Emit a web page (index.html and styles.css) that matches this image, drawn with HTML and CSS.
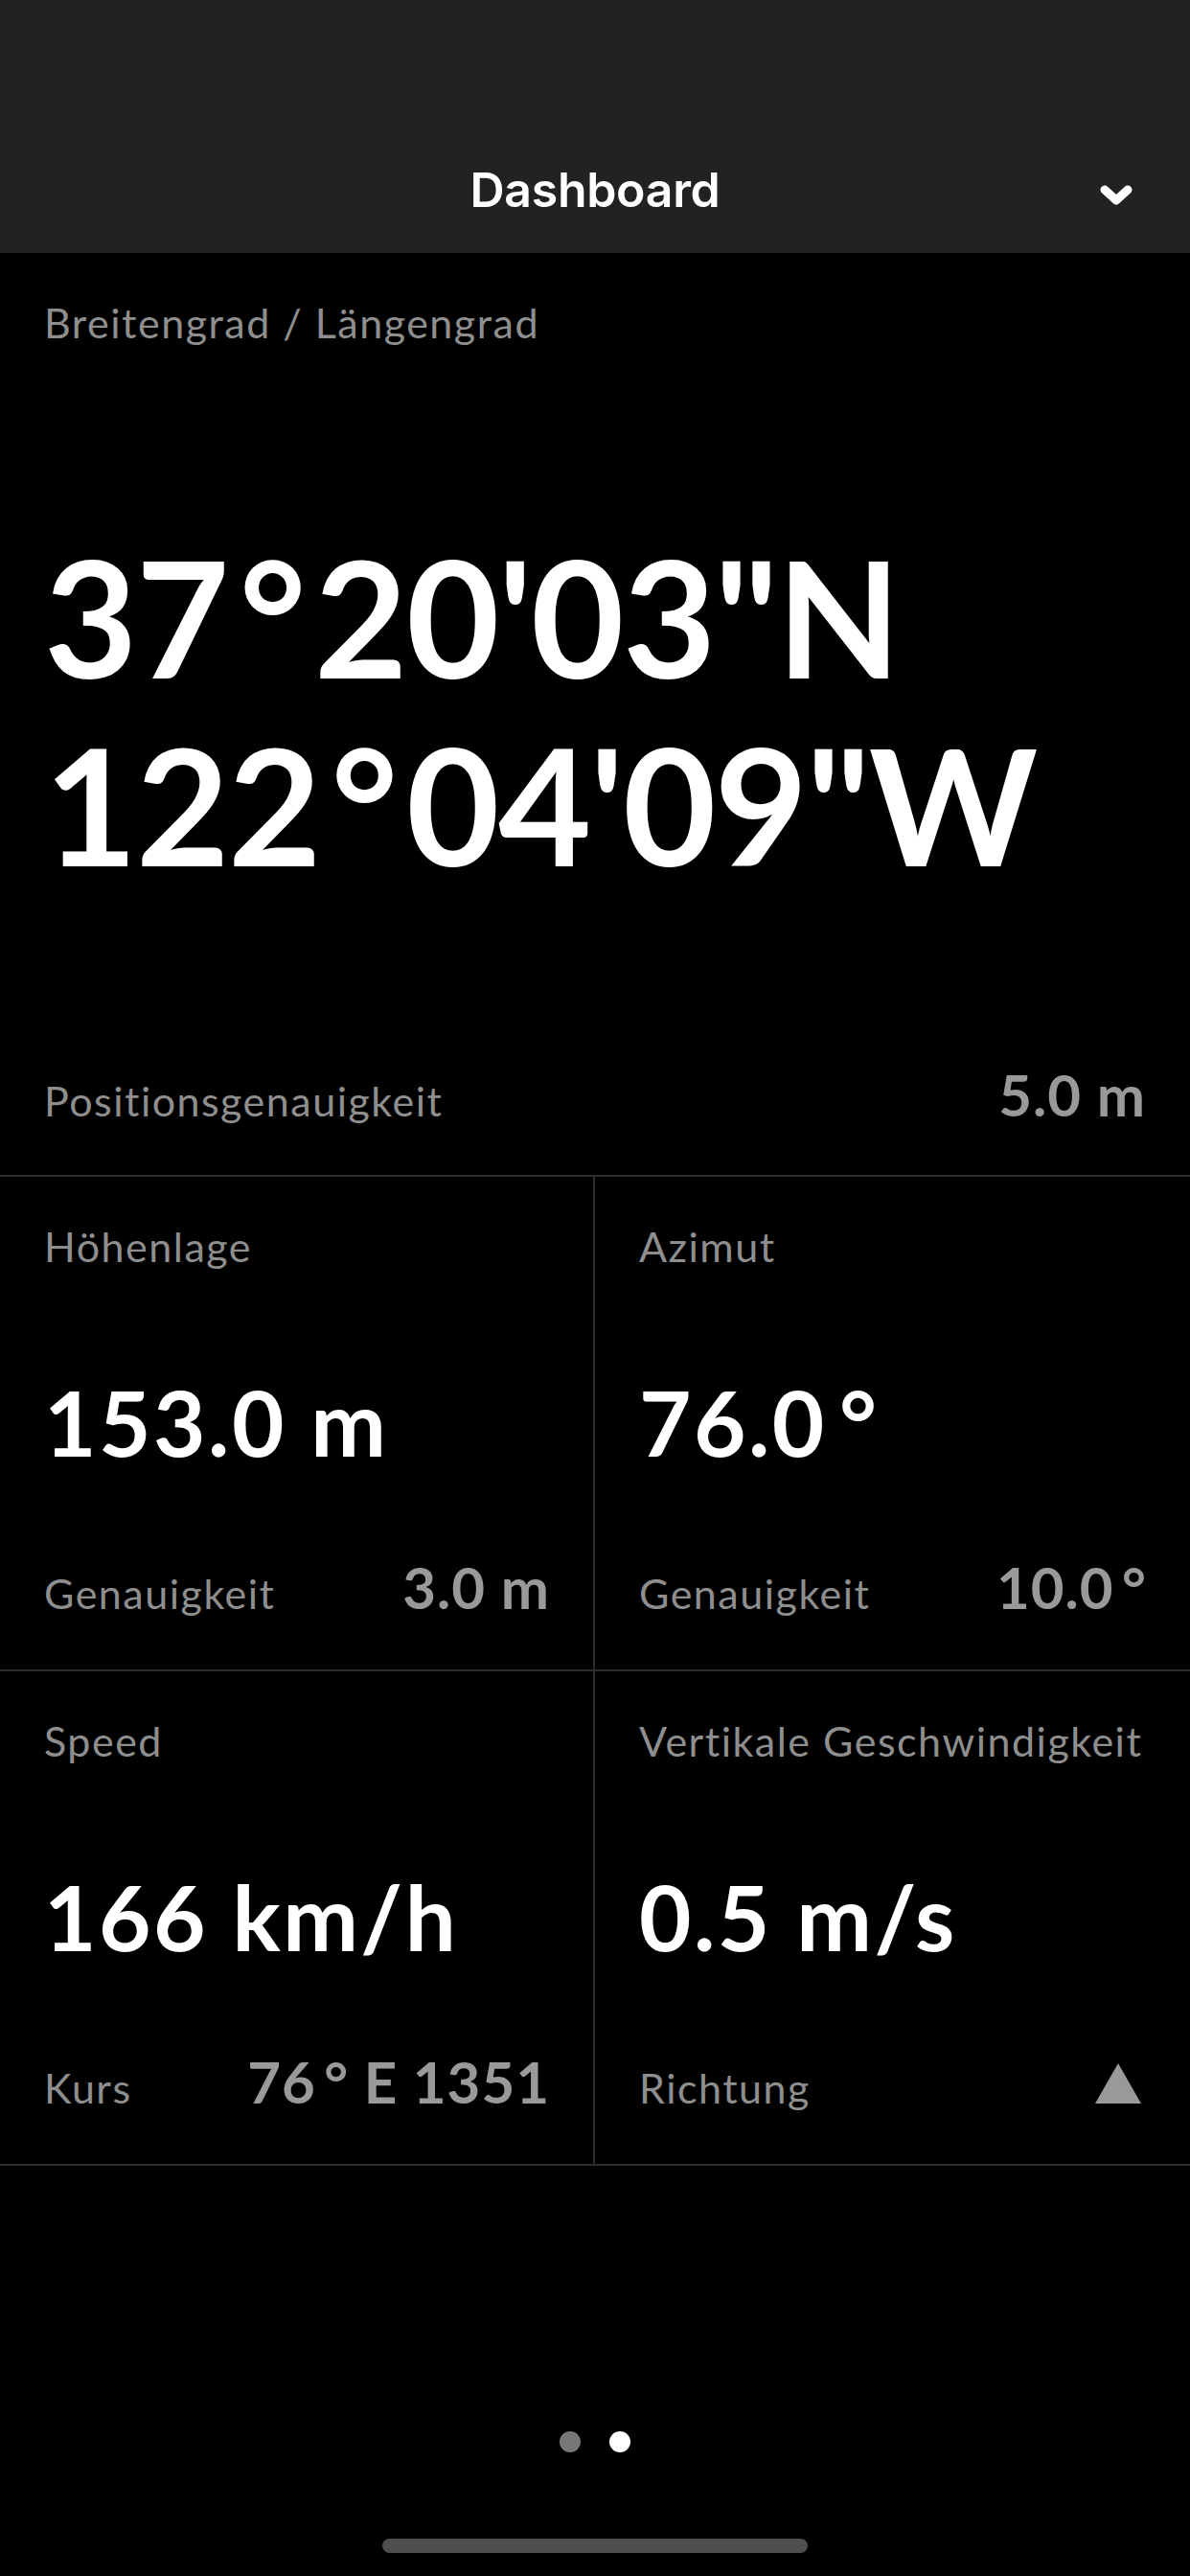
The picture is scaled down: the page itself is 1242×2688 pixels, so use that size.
FILE: index.html
```html
<!DOCTYPE html>
<html lang="de">
<head>
<meta charset="utf-8">
<title>Dashboard</title>
<link rel="stylesheet" href="styles.css">
</head>
<body>
<header class="topbar">
  <div class="topbar-side"></div>
  <h1 class="topbar-title">Dashboard</h1>
  <div class="topbar-side topbar-right">
    <svg class="chevron" width="34" height="22" viewBox="0 0 34 22"><path d="M5 5 L17 16 L29 5" fill="none" stroke="#fff" stroke-width="9" stroke-linecap="round" stroke-linejoin="round"/></svg>
  </div>
</header>
<main class="content">
  <section class="coords">
    <div class="label">Breitengrad / Längengrad</div>
    <div class="coord-lines">
      <div class="coord">37<span class="deg-big">°</span>20'03"N</div>
      <div class="coord">122<span class="deg-big">°</span>04'09"W</div>
    </div>
    <div class="pos-row">
      <span class="label row-label">Positionsgenauigkeit</span>
      <span class="sub-value">5.0 m</span>
    </div>
  </section>
  <section class="grid">
    <div class="cell">
      <div class="label">Höhenlage</div>
      <div class="big-value">153.0 m</div>
      <div class="sub-row"><span class="label row-label">Genauigkeit</span><span class="sub-value">3.0 m</span></div>
    </div>
    <div class="cell">
      <div class="label">Azimut</div>
      <div class="big-value">76.0<span class="deg">°</span></div>
      <div class="sub-row"><span class="label row-label">Genauigkeit</span><span class="sub-value">10.0<span class="deg">°</span></span></div>
    </div>
    <div class="cell">
      <div class="label">Speed</div>
      <div class="big-value">166 km/h</div>
      <div class="sub-row"><span class="label row-label">Kurs</span><span class="sub-value">76<span class="deg">°</span> E 1351</span></div>
    </div>
    <div class="cell">
      <div class="label">Vertikale Geschwindigkeit</div>
      <div class="big-value">0.5 m/s</div>
      <div class="sub-row"><span class="label row-label">Richtung</span><svg class="arrow" width="48" height="42" viewBox="0 0 48 42"><polygon points="24,0 48,42 0,42" fill="#999"/></svg></div>
    </div>
  </section>
  <nav class="pager">
    <span class="dot"></span>
    <span class="dot dot-active"></span>
  </nav>
  <div class="home-indicator"></div>
</main>
</body>
</html>
```

FILE: styles.css
```css
html, body {
  margin: 0;
  padding: 0;
  background: #000;
}
body {
  width: 1242px;
  min-height: 2688px;
  font-family: Lato, "Open Sans", "DejaVu Sans", sans-serif;
  color: #fff;
}
.topbar {
  height: 264px;
  box-sizing: border-box;
  background: #222222;
  display: grid;
  grid-template-columns: 1fr auto 1fr;
  align-items: start;
  padding-top: 168px;
}
.topbar-title {
  margin: 0;
  font-family: Inter, "Liberation Sans", sans-serif;
  font-weight: 600;
  font-size: 50px;
  line-height: 60px;
  color: #fff;
  letter-spacing: -0.3px;
}
.topbar-right {
  display: flex;
  justify-content: flex-end;
  padding-right: 60px;
  padding-top: 25px;
}
.chevron {
  display: block;
}
.content {
  display: flex;
  flex-direction: column;
}
.label {
  font-size: 43px;
  line-height: 52px;
  color: #8e8e8e;
  font-weight: 400;
  letter-spacing: 1.5px;
  white-space: nowrap;
}
.row-label {
  padding-top: 17px;
}
.coords {
  padding: 47px 46px 0 46px;
  border-bottom: 2px solid #2c2c2c;
}
.coord-lines {
  margin-top: 182px;
}
.coord {
  font-size: 168px;
  line-height: 196px;
  font-weight: 700;
  color: #fff;
  white-space: nowrap;
  letter-spacing: -1.5px;
}
.deg-big {
  margin: 0 0.06em 0 0.07em;
}
.deg {
  margin-left: 0.14em;
}
.pos-row {
  margin-top: 169px;
  padding-bottom: 48px;
  display: flex;
  justify-content: space-between;
  align-items: baseline;
}
.sub-value {
  font-size: 60px;
  line-height: 72px;
  font-weight: 700;
  color: #999;
  white-space: nowrap;
  letter-spacing: 1px;
}
.grid {
  display: grid;
  grid-template-columns: 1fr 1fr;
}
.cell {
  padding: 47px 45px 50px 46px;
  border-bottom: 2px solid #2c2c2c;
  display: flex;
  flex-direction: column;
}
.cell:nth-child(odd) {
  border-right: 2px solid #2c2c2c;
}
.big-value {
  margin-top: 101px;
  font-size: 94px;
  line-height: 112px;
  font-weight: 700;
  color: #fff;
  white-space: nowrap;
  letter-spacing: 2.5px;
}
.sub-row {
  margin-top: 80px;
  height: 72px;
  display: flex;
  justify-content: space-between;
  align-items: baseline;
}
.arrow {
  display: block;
  margin-right: 6px;
}
.pager {
  margin-top: 277px;
  display: flex;
  justify-content: center;
  gap: 30px;
}
.dot {
  width: 22px;
  height: 22px;
  border-radius: 50%;
  background: #777;
}
.dot-active {
  background: #fff;
}
.home-indicator {
  margin: 90px auto 0;
  width: 444px;
  height: 15px;
  border-radius: 8px;
  background: #4f4f4f;
}
```
